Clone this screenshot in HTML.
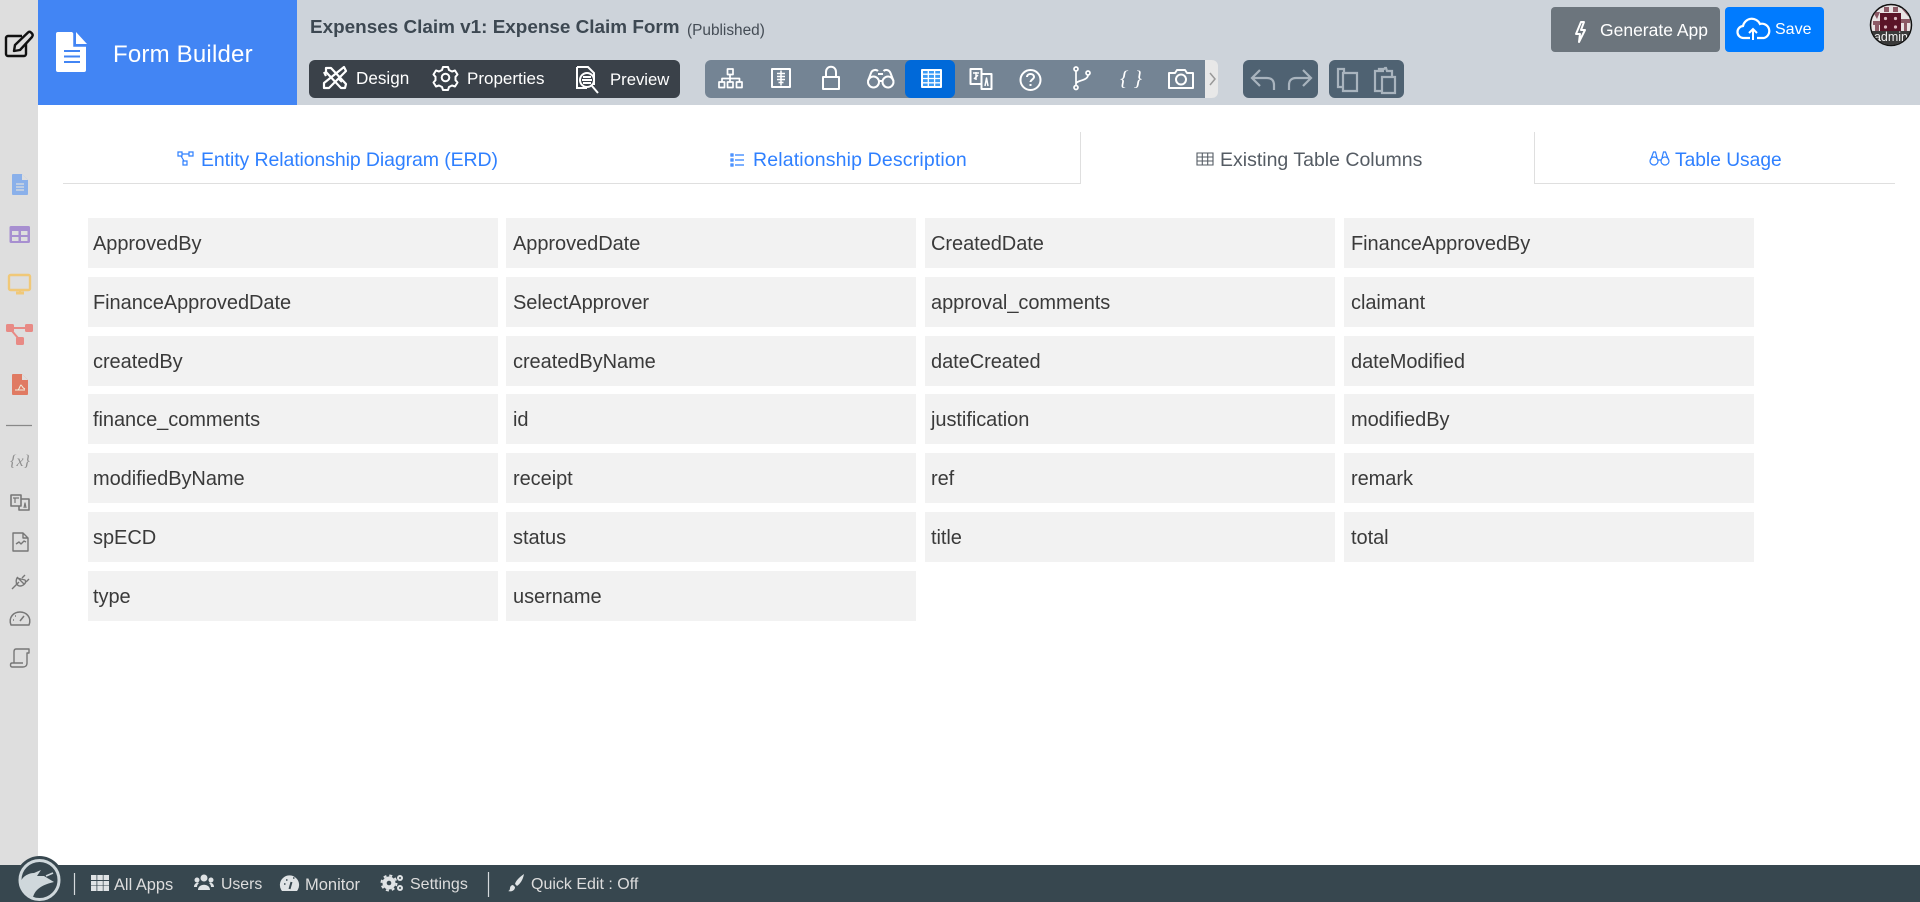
<!DOCTYPE html>
<html><head><meta charset="utf-8"><title>Form Builder</title>
<style>
html,body{margin:0;padding:0;width:1920px;height:902px;overflow:hidden;background:#fff;font-family:"Liberation Sans",sans-serif}
.a{position:absolute}
.t{position:absolute;white-space:nowrap;line-height:1}
.c{position:absolute;width:410px;height:50px;background:#f2f2f2;color:#3a3a3a;font-size:20px;line-height:52px;text-indent:5px;letter-spacing:-.05px;white-space:nowrap}
.k{text-indent:7px}
.m{text-indent:6px}
svg{position:absolute;left:0;top:0}
</style></head><body>
<div class="a" style="left:0;top:0;width:38px;height:865px;background:#dedede"></div>
<div class="a" style="left:38px;top:0;width:1882px;height:105px;background:#cdd3da"></div>
<div class="a" style="left:38px;top:0;width:259px;height:105px;background:#4285f4"></div>
<div class="a" style="left:309px;top:60px;width:371px;height:38px;background:#3a4149;border-radius:6px"></div>
<div class="a" style="left:705px;top:60px;width:512px;height:38px;background:#748494;border-radius:6px"></div>
<div class="a" style="left:1205px;top:60px;width:13px;height:38px;background:#e8e8e8;border-radius:0 6px 6px 0"></div>
<div class="a" style="left:905px;top:60px;width:50px;height:38px;background:#0069d9;border-radius:6px"></div>
<div class="a" style="left:1243px;top:60px;width:75px;height:38px;background:#4f6272;border-radius:6px"></div>
<div class="a" style="left:1329px;top:60px;width:75px;height:38px;background:#4f6272;border-radius:6px"></div>
<div class="a" style="left:1551px;top:7px;width:169px;height:45px;background:#6c757d;border-radius:4px"></div>
<div class="a" style="left:1725px;top:7px;width:99px;height:45px;background:#007bff;border-radius:4px"></div>
<div class="a" style="left:0;top:865px;width:1920px;height:37px;background:#37474f"></div>
<div class="a" style="left:63px;top:183px;width:1017px;height:1px;background:#dfdfdf"></div>
<div class="a" style="left:1535px;top:183px;width:360px;height:1px;background:#dfdfdf"></div>
<div class="a" style="left:1080px;top:132px;width:1px;height:52px;background:#dfdfdf"></div>
<div class="a" style="left:1534px;top:132px;width:1px;height:52px;background:#dfdfdf"></div>

<span class="t" style="left:113px;top:43px;font-size:24px;color:#fff;letter-spacing:.2px">Form Builder</span>
<span class="t" style="left:310px;top:19px;font-size:18.900px;font-weight:bold;color:#3d4852">Expenses Claim v1: Expense Claim Form</span>
<span class="t" style="left:687px;top:23px;font-size:15.400px;color:#444c55">(Published)</span>
<span class="t" style="left:356px;top:70px;font-size:17.100px;color:#fff">Design</span>
<span class="t" style="left:467px;top:70px;font-size:17px;color:#fff">Properties</span>
<span class="t" style="left:610px;top:72px;font-size:16.700px;color:#fff">Preview</span>
<span class="t" style="left:1600px;top:22px;font-size:17.500px;color:#fff">Generate App</span>
<span class="t" style="left:1775px;top:22px;font-size:16px;color:#fff">Save</span>

<span class="t" style="left:201px;top:151px;font-size:19.500px;color:#2f80ff;letter-spacing:-.1px">Entity Relationship Diagram (ERD)</span>
<span class="t" style="left:753px;top:151px;font-size:19.500px;color:#2f80ff;letter-spacing:.15px">Relationship Description</span>
<span class="t" style="left:1220px;top:151px;font-size:19.500px;color:#555c64">Existing Table Columns</span>
<span class="t" style="left:1675px;top:151px;font-size:19.200px;color:#2f80ff">Table Usage</span>

<div class="c" style="left:88px;top:218px">ApprovedBy</div><div class="c k" style="left:506px;top:218px">ApprovedDate</div><div class="c m" style="left:925px;top:218px">CreatedDate</div><div class="c k" style="left:1344px;top:218px">FinanceApprovedBy</div>
<div class="c" style="left:88px;top:277px">FinanceApprovedDate</div><div class="c k" style="left:506px;top:277px">SelectApprover</div><div class="c m" style="left:925px;top:277px">approval_comments</div><div class="c k" style="left:1344px;top:277px">claimant</div>
<div class="c" style="left:88px;top:336px">createdBy</div><div class="c k" style="left:506px;top:336px">createdByName</div><div class="c m" style="left:925px;top:336px">dateCreated</div><div class="c k" style="left:1344px;top:336px">dateModified</div>
<div class="c" style="left:88px;top:394px">finance_comments</div><div class="c k" style="left:506px;top:394px">id</div><div class="c m" style="left:925px;top:394px">justification</div><div class="c k" style="left:1344px;top:394px">modifiedBy</div>
<div class="c" style="left:88px;top:453px">modifiedByName</div><div class="c k" style="left:506px;top:453px">receipt</div><div class="c m" style="left:925px;top:453px">ref</div><div class="c k" style="left:1344px;top:453px">remark</div>
<div class="c" style="left:88px;top:512px">spECD</div><div class="c k" style="left:506px;top:512px">status</div><div class="c m" style="left:925px;top:512px">title</div><div class="c k" style="left:1344px;top:512px">total</div>
<div class="c" style="left:88px;top:571px">type</div><div class="c k" style="left:506px;top:571px">username</div>

<span class="t" style="left:114px;top:877px;font-size:16.400px;color:#ddd">All Apps</span>
<span class="t" style="left:221px;top:877px;font-size:15.800px;color:#ddd">Users</span>
<span class="t" style="left:305px;top:877px;font-size:16.500px;color:#ddd">Monitor</span>
<span class="t" style="left:410px;top:877px;font-size:16px;color:#ddd">Settings</span>
<span class="t" style="left:531px;top:877px;font-size:16px;color:#ddd">Quick Edit : Off</span>

<svg width="1920" height="902" viewBox="0 0 1920 902" fill="none">
<defs><clipPath id="av"><circle cx="1891" cy="25" r="20"/></clipPath></defs>
<!-- top-left edit -->
<g stroke="#111" stroke-width="2.400" stroke-linejoin="round"><path d="M22 36H8a2 2 0 0 0-2 2v16a2 2 0 0 0 2 2h16a2 2 0 0 0 2-2V43"/><path d="M15 45l-1 6 6-1 12-13c1-1.500 1-2.500 0-3.500l-1-1c-1-1-2-1-3 0z"/></g>
<!-- form builder doc -->
<path d="M58 32h14l14 14v24a2 2 0 0 1-2 2H58a2 2 0 0 1-2-2V34a2 2 0 0 1 2-2z" fill="#fff"/>
<path d="M74 32l13 14H74z" fill="#4285f4" stroke="#4285f4" stroke-width="1.500"/><path d="M76 32l11 12H76z" fill="#fff"/>
<path d="M64 51h16M64 56.500h16M64 62h16" stroke="#4285f4" stroke-width="2"/>
<!-- design -->
<g stroke="#fff" stroke-width="2.200" stroke-linejoin="round"><path d="M326 68l5 0 15 16-1 4-4 0-15-16z"/><path d="M344 67l2 4-17 17-5 0 0-5z"/><path d="M326 76l-2-4M339 79l3 3"/></g>
<!-- gear -->
<g stroke="#fff" stroke-width="2"><circle cx="445.500" cy="77.500" r="3.800"/><path d="M443 67h5l1 3 3 1.500 3-1 2.500 4-2 2.300v3.400l2 2.300-2.500 4-3-1-3 1.500-1 3h-5l-1-3-3-1.500-3 1-2.500-4 2-2.300v-3.400l-2-2.300 2.500-4 3 1 3-1.500z" stroke-linejoin="round"/></g>
<!-- preview -->
<g stroke="#fff" stroke-width="2"><path d="M577 67h11l6 6v12M577 67v21h10"/><circle cx="587" cy="80" r="7"/><path d="M583 77h8M582 80h10M583 83h8M592 86l6 7" /></g>
<!-- toolbar -->
<g stroke="#fff" stroke-width="1.700" stroke-linejoin="round">
<path d="M727.500 69h5.500v5.500h-5.500zM719 82h5.500v5.500H719zM727.500 82h5.500v5.500h-5.500zM736.500 82h5.500v5.500h-5.500zM730 74.500v4M722 82v-3.500h17.500v3.500M730 78.500v3.500"/>
<path d="M772 69h18v18h-18z" stroke-width="2"/><path d="M781 70.500v15M777 73.500h8M777 76.500h8M777 79.500h8M778.500 82.500h5" stroke-width="1.500"/>
<path d="M823 77h16v12h-16zM826 77v-5c0-7 10-7 10 0v5" stroke-width="2"/>
<g stroke-width="2"><circle cx="873.500" cy="82" r="5.500"/><circle cx="888" cy="82" r="5.500"/><path d="M868 81l3-8c1-3 5-4 7-2M893.500 81l-3-8c-1-3-5-4-7-2M879 81h3.500M878 74h5"/></g>
<path d="M922 70h19v17h-19z" fill="#3b9bf5" stroke-width="2"/><path d="M928.300 70v17M934.600 70v17M922 74.200h19M922 78.500h19M922 82.800h19" stroke-width="1.300"/>
<path d="M970.500 69h11v15h-11zM981.500 74h10v15h-10v-5" stroke-width="2"/><path d="M973 73h6M976 72v8M974 79l4-4M985 86l1.500-8 1.500 8" stroke-width="1.500"/>
<circle cx="1030.500" cy="80" r="10" stroke-width="2"/><path d="M1027 77c0-4 7-4 7 0 0 2-3.500 3-3.500 5M1030.500 84v2" stroke-width="2"/>
<circle cx="1076" cy="69" r="2"/><circle cx="1076" cy="87.500" r="2"/><circle cx="1088" cy="73" r="2"/><path d="M1076 71v14.500M1088 75c0 6-12 5-12 9"/>
<path d="M1169 73h6l2-3h8l2 3h6v15h-24z" stroke-width="2"/><circle cx="1181" cy="79.500" r="5" stroke-width="2"/>
</g>
<text x="1131" y="85" font-family="Liberation Serif,serif" font-style="italic" font-size="21" fill="#fff" text-anchor="middle">{ }</text>
<path d="M1210 73l5 6-5 6" stroke="#999" stroke-width="1.500"/>
<!-- undo/redo/copy/paste -->
<g stroke="#a9b4be" stroke-width="2.200">
<path d="M1260 70l-8 8 8 8M1252 78h15c5 0 7 3 7 7v5M1303 70l8 8-8 8M1311 78h-15c-5 0-7 3-7 7v5"/>
<path d="M1344 73v-4h-6v18h5M1343 73h14v18h-14z"/>
<path d="M1384 71h-9v20h6M1379 71v-2h5l1-1h1l1 3h5v5M1382 77h13v16h-13z"/>
</g>
<!-- generate / save -->
<path d="M1581 22l-5 12h4l-1 8 6-12h-4l3-8z" stroke="#fff" stroke-width="2" stroke-linejoin="round"/>
<path d="M1750 38h-6a6 6 0 0 1-1-12 9 9 0 0 1 17-2 7 7 0 0 1 4 14h-7" stroke="#fff" stroke-width="2.200"/><path d="M1753 40V29M1749 33l4-4 4 4" stroke="#fff" stroke-width="2"/>
<!-- avatar -->
<circle cx="1891" cy="25" r="20.500" fill="#e9e3e4" stroke="#111" stroke-width="1.500"/>
<g clip-path="url(#av)">
<path d="M1873 12h7l-3 7zM1902 9h7l-1 7zM1873 21h8v4h-2v6h-4v-6h-2zM1901 19h9v4h-3v8h-3v-8h-3zM1884 7h5v5h-5zM1893 7h5v5h-5z" fill="#8c5a66"/>
<rect x="1880" y="13" width="21" height="19" fill="#5a1428"/>
<g fill="#d8b8c0"><circle cx="1885.500" cy="18.500" r="1.600"/><circle cx="1895.500" cy="18.500" r="1.600"/><circle cx="1885.500" cy="27" r="1.600"/><circle cx="1895.500" cy="27" r="1.600"/></g>
<rect x="1870" y="31" width="42" height="15" fill="#3a3a3a"/>
<text x="1891" y="41" font-family="Liberation Sans,sans-serif" font-size="12.500" fill="#f0f0f0" text-anchor="middle">admin</text>
</g>
<!-- sidebar -->
<path d="M13 174h9l6 6v14a1 1 0 0 1-1 1H13a1 1 0 0 1-1-1v-19a1 1 0 0 1 1-1z" fill="#8ab0ea"/><path d="M22 174l6 6h-6z" fill="#dedede"/><path d="M16 184h8M16 187h8M16 190h8" stroke="#dedede" stroke-width="1.200"/>
<rect x="9.500" y="226" width="20.500" height="17" rx="1.500" fill="#a78fd0"/><path d="M12 231h6.500v4H12zM21 231h6.500v4H21zM12 237h6.500v4H12zM21 237h6.500v4H21z" fill="#dedede"/>
<rect x="9" y="275" width="21" height="15" rx="1.500" stroke="#f0c878" stroke-width="2.400"/><path d="M16 293h8" stroke="#f0c878" stroke-width="3"/><path d="M20 290v3" stroke="#f0c878" stroke-width="2"/>
<g fill="#e88a85"><rect x="6" y="324" width="8" height="8" rx="1.500"/><rect x="25" y="324" width="8" height="8" rx="1.500"/><rect x="16" y="337" width="8" height="8" rx="1.500"/></g><path d="M14 328h11M12 331l6 7" stroke="#e88a85" stroke-width="2"/>
<path d="M13 374h9l6 6v14a1 1 0 0 1-1 1H13a1 1 0 0 1-1-1v-19a1 1 0 0 1 1-1z" fill="#e07a62"/><path d="M22 374l6 6h-6z" fill="#dedede"/><path d="M15 390h10M18 390c2-2 2-5 3-5 1 0 1 3 4 4" stroke="#eed" stroke-width="1"/>
<path d="M6 425.500h26" stroke="#888" stroke-width="1.200"/>
<text x="20" y="466" font-family="Liberation Serif,serif" font-style="italic" font-size="16" fill="#8f8f8f" text-anchor="middle">{x}</text>
<g stroke="#777" stroke-width="1.600" stroke-linejoin="round">
<path d="M11 495h10v11H11zM21 499h8v11h-10v-4" /><path d="M13 498h6M15 498v5M24 508l1-5 1 5" stroke-width="1.200"/>
<path d="M13 533h10l5 5v13H13zM23 533v5h5M16 544l3-2 2 2 3-3 2 1" stroke-width="1.400"/>
<path d="M12 589l6-6M17 577l7 7M19 582l-2 2-1-1M17 578c-2 4 0 8 3 8 3 0 7-3 5-6zM22 578l3-3M26 582l3-3" stroke-width="1.400"/>
<path d="M11 625c-3-8 3-13 9-13s12 5 9 13zM20 621l4-5M13 620h1M15 616h1" stroke-width="1.500"/>
<path d="M16 649h13v4h-2v10c0 3-2 4-4 4H12c-2 0-2-4 0-4h11M16 649c-2 0-2 2-2 3v11" stroke-width="1.400"/>
</g>
<!-- footer logo -->
<circle cx="39.500" cy="880" r="24" fill="#37474f"/>
<circle cx="39.500" cy="880" r="19.500" stroke="#cfd8dc" stroke-width="3" fill="#37474f"/>
<path d="M21 881C23 876 29 873 34 873L41 870 37 876 44 876 54 882C46 884 41 886 37 890 35 892 34 894 33 897 26 894 21 888 21 881z" fill="#cfd8dc"/>
<path d="M46 876l7-3" stroke="#cfd8dc" stroke-width="1.600"/>
<path d="M74.500 873v22M488.500 872v25" stroke="#d5dadd" stroke-width="1.200"/>
<g fill="#dfe3e5">
<path d="M91 875h5.500v5H91zM97.300 875h5.500v5h-5.500zM103.500 875h5.500v5h-5.500zM91 881h5.500v4.500H91zM97.300 881h5.500v4.500h-5.500zM103.500 881h5.500v4.500h-5.500zM91 886h5.500v5H91zM97.300 886h5.500v5h-5.500zM103.500 886h5.500v5h-5.500z"/>
<circle cx="204" cy="878" r="3.500"/><circle cx="197" cy="880" r="2.500"/><circle cx="211" cy="880" r="2.500"/>
<path d="M198 890c0-7 12-7 12 0zM194 887c0-4 4-5 5-4-1 1-2 2-2 4zM214 887c0-4-4-5-5-4 1 1 2 2 2 4z"/>
<path d="M282 891a9.600 9.600 0 1 1 15 0z"/>
<circle cx="389" cy="883" r="6.500"/><circle cx="400" cy="878" r="3"/><circle cx="400" cy="888" r="3"/>
<path d="M524 874c-3 2-8 6-9 10l2 2c3-2 6-6 7-12zM513 885c-2 0-3 2-3 3 0 2-1 3-2 3 3 1 7 0 7-4z"/>
</g>
<circle cx="389" cy="883" r="7.500" stroke="#dfe3e5" stroke-width="2" stroke-dasharray="3 2.900"/>
<circle cx="389" cy="883" r="2.300" fill="#37474f"/><circle cx="400" cy="878" r="1" fill="#37474f"/><circle cx="400" cy="888" r="1" fill="#37474f"/>
<path d="M289.500 889l2-7" stroke="#37474f" stroke-width="2"/><path d="M284 884h1.500M286 880h1.500M293 878h1.500" stroke="#37474f" stroke-width="1.500"/>
<!-- tab icons -->
<g stroke="#2f80ff" stroke-width="1.200">
<path d="M178 152h4v4h-4zM189 152h4v4h-4zM183 161h4v4h-4zM182 154h7M181 156l3 5"/>
<path d="M731 154h2v2h-2zM731 159h2v2h-2zM731 164h2v2h-2zM735 155h9M735 160h9M735 165h9"/>
<path d="M1650 161a4 4 0 1 0 8 0 4 4 0 1 0-8 0zM1661 161a4 4 0 1 0 8 0 4 4 0 1 0-8 0zM1650.500 160l3-8h2l1.500 6M1668.500 160l-3-8h-2l-1.500 6M1658 160h3"/>
</g>
<path d="M1197 153h16v12h-16zM1197 157h16M1197 161h16M1202.300 153v12M1207.700 153v12" stroke="#555c64" stroke-width="1.100"/>
</svg>
</body></html>
